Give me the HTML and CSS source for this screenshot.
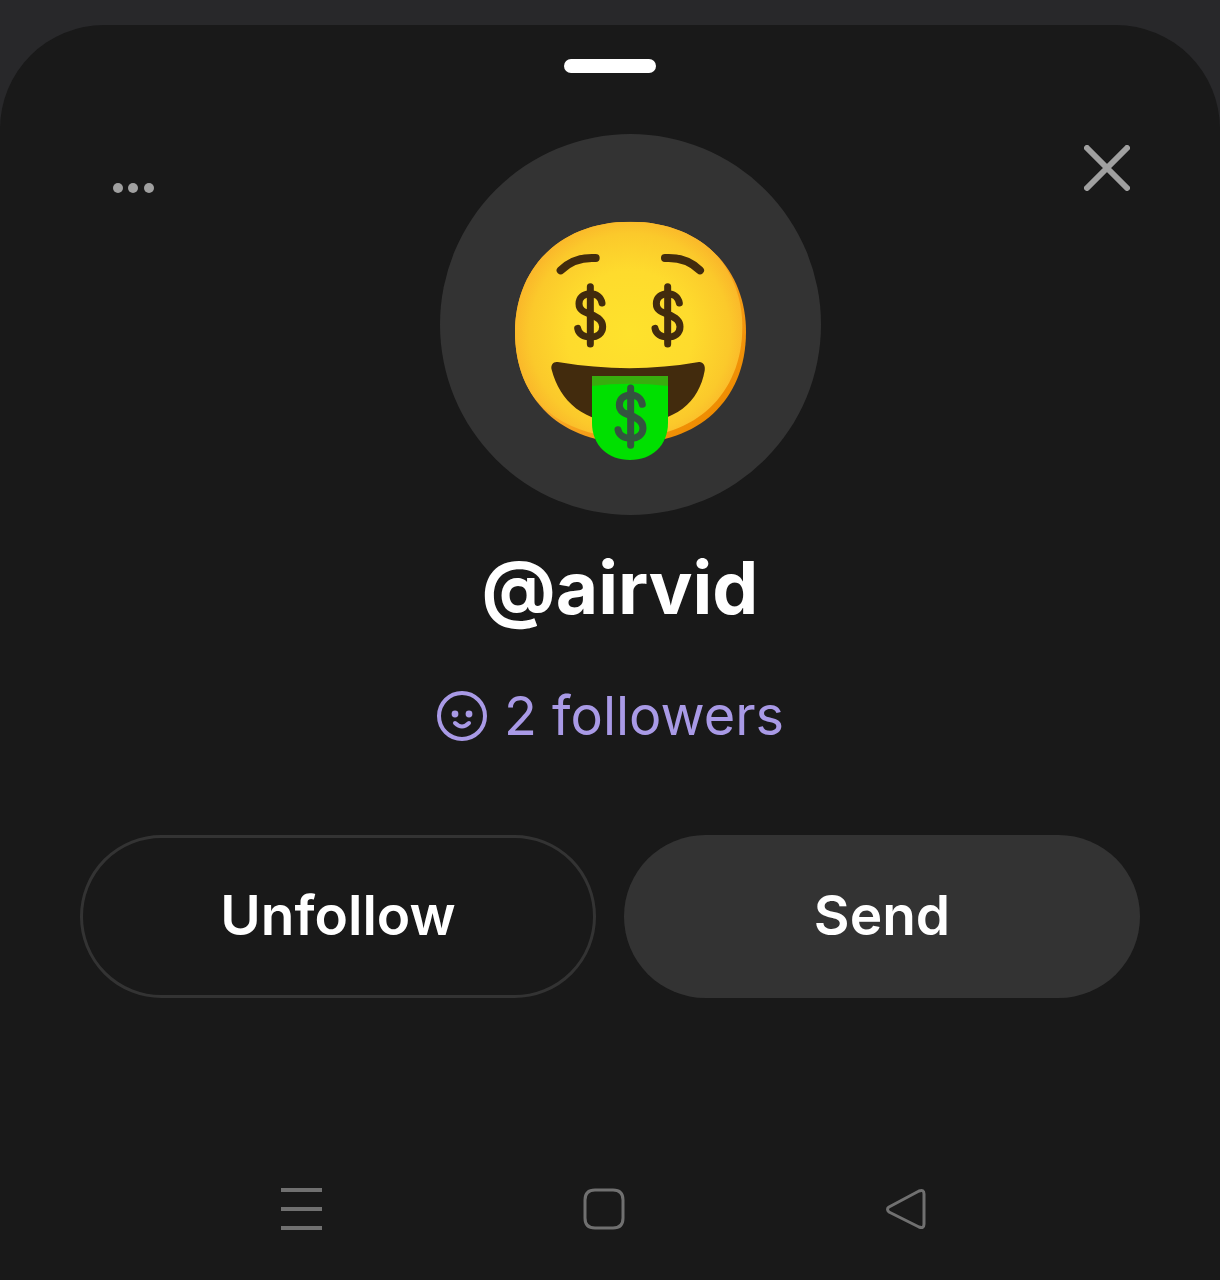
FILE: index.html
```html
<!DOCTYPE html>
<html lang="en">
<head>
<meta charset="utf-8">
<meta name="viewport" content="width=device-width, initial-scale=1">
<title>@airvid</title>
<link rel="stylesheet" href="styles.css">
</head>
<body>
<main class="sheet">
  <div class="handle"></div>
  <header class="profile-header">
    <button class="icon-button more" type="button" aria-label="More options">
      <svg width="42" height="12" viewBox="0 0 42 12" fill="#a0a0a0"><circle cx="6" cy="6" r="5"/><circle cx="21" cy="6" r="5"/><circle cx="37" cy="6" r="5"/></svg>
    </button>
    <div class="avatar">
      <svg class="emoji" viewBox="-180 -213 1143 1143" role="img" aria-label="Money-mouth face">
        <defs>
          <radialGradient id="face" cx="390" cy="385" r="375" gradientUnits="userSpaceOnUse">
            <stop offset="0" stop-color="#fee22c"/>
            <stop offset=".5" stop-color="#fedb2d"/>
            <stop offset=".8" stop-color="#fbc92b"/>
            <stop offset=".93" stop-color="#fab72a"/>
            <stop offset="1" stop-color="#f8a327"/>
          </radialGradient>
          <linearGradient id="rim" x1="200" y1="200" x2="640" y2="640" gradientUnits="userSpaceOnUse">
            <stop offset=".4" stop-color="#f9aa28"/>
            <stop offset="1" stop-color="#ee8b00"/>
          </linearGradient>
          <clipPath id="head"><path d="M391 50C610 50 738 198 738 380C738 590 590 714 391 714C192 714 45 590 45 380C45 198 172 50 391 50Z"/></clipPath>
        </defs>
        <g clip-path="url(#head)">
          <path fill="url(#rim)" d="M30 30H750V730H30Z"/>
          <path fill="url(#face)" d="M385 40C600 40 727 190 727 365C727 570 582 697 385 697C186 697 35 580 35 370C35 190 170 40 385 40Z"/>
        </g>
        <g fill="none" stroke="#422b0d" stroke-width="24" stroke-linecap="round">
          <path d="M182 196Q223 155 287 159"/>
          <path d="M600 196Q559 155 495 159"/>
        </g>
        <path fill="#422b0d" d="M173 471Q391 508 597 471C609 470 617 482 614 497C597 590 529 654 390 656C248 655 180 588 155 494C151 480 160 469 173 471Z"/>
        <path fill="#00e000" d="M276 513H504V654C504 722 455 765 390 765C325 765 276 722 276 654Z"/>
        <path fill="#38ad0e" d="M276 513H504V543Q390 530 276 543Z"/>
        <defs>
          <g id="dollar" fill="none" stroke-width="21" stroke-linecap="round">
            <path d="M0-85V87"/>
            <path d="M35-36C32-53 18-64 0-64C-20-64-34-52-34-34C-34-14-18-9 0-2C20 5 37 14 37 35C37 54 22 66 0 66C-20 66-35 57-38 40"/>
          </g>
        </defs>
        <use href="#dollar" x="271" y="330" stroke="#422b0d"/>
        <use href="#dollar" x="503" y="330" stroke="#422b0d"/>
        <use href="#dollar" x="392" y="634" stroke="#34543f"/>
      </svg>
    </div>
    <button class="icon-button close" type="button" aria-label="Close">
      <svg width="46" height="46" viewBox="0 0 46 46" fill="none" stroke="#a0a0a0" stroke-width="6" stroke-linecap="round"><path d="M3 3 43 43M43 3 3 43"/></svg>
    </button>
  </header>
  <h1 class="username">@airvid</h1>
  <a class="followers" href="#followers">
    <svg width="52" height="52" viewBox="0 0 52 52" fill="none" stroke="#a99ae6" stroke-width="4" stroke-linecap="round"><circle cx="26" cy="26" r="23"/><path d="M19 33Q26 40 33 33"/><g fill="#a99ae6" stroke="none"><circle cx="19" cy="24" r="3.4"/><circle cx="33" cy="24" r="3.4"/></g></svg>
    <span>2 followers</span>
  </a>
  <div class="actions">
    <button class="action outline" type="button">Unfollow</button>
    <button class="action filled" type="button">Send</button>
  </div>
  <nav class="system-nav" aria-label="System navigation">
    <button class="icon-button" type="button" aria-label="Recent apps"><svg width="42" height="42" viewBox="0 0 42 42" fill="none" stroke="#707070" stroke-width="4"><path d="M0 2H41M0 21H41M0 40H41"/></svg></button>
    <button class="icon-button" type="button" aria-label="Home"><svg width="42" height="42" viewBox="0 0 42 42" fill="none" stroke="#707070" stroke-width="3"><path d="M12 2H30Q40 2 40 12V30Q40 40 30 40H12Q2 40 2 30V12Q2 2 12 2Z"/></svg></button>
    <button class="icon-button" type="button" aria-label="Back"><svg width="42" height="42" viewBox="0 0 42 42" fill="none" stroke="#707070" stroke-width="3" stroke-linejoin="round"><path d="M4 19 34 3Q39 1 39 6V36Q39 41 34 39L4 24Q1 21 4 19Z"/></svg></button>
  </nav>
</main>
</body>
</html>
```
FILE: styles.css
```css
* {
  box-sizing: border-box;
}

body {
  margin: 0;
  padding-top: 25px;
  min-height: 100vh;
  display: flex;
  background: #28282a;
  color: #fff;
  font-family: Inter, "Liberation Sans", sans-serif;
}

button {
  border: 0;
  background: none;
  color: inherit;
  font: inherit;
  cursor: pointer;
}

svg {
  display: block;
}

.sheet {
  flex: 1;
  display: flex;
  flex-direction: column;
  padding-top: 34px;
  border-radius: 104px 104px 0 0;
  background: #191919;
}

.handle {
  align-self: center;
  width: 92px;
  height: 14px;
  border-radius: 7px;
  background: #fff;
}

.profile-header {
  display: grid;
  grid-template-columns: 1fr auto 1fr;
  align-items: start;
  margin-top: 61px;
  padding: 0 72px 0 112px;
}

.icon-button {
  padding: 0;
}

.more {
  justify-self: start;
  padding: 48px 0;
}

.close {
  justify-self: end;
  padding: 11px 18px;
}

.avatar {
  width: 381px;
  height: 381px;
  border-radius: 50%;
  background: #333;
}

.emoji {
  width: 100%;
  height: 100%;
}

.username {
  margin: 25px 0 0 20px;
  text-align: center;
  font-size: 73px;
  line-height: 96px;
  font-weight: 700;
}

.followers {
  align-self: center;
  display: flex;
  align-items: center;
  gap: 16px;
  margin-top: 44px;
  color: #a99ae6;
  font-size: 54px;
  line-height: 72px;
  text-decoration: none;
}

.actions {
  display: grid;
  grid-template-columns: 1fr 1fr;
  gap: 28px;
  margin-top: 83px;
  padding: 0 80px;
}

.action {
  height: 163px;
  padding: 0 0 4px;
  border-radius: 82px;
  font-size: 55px;
  font-weight: 600;
}

.outline {
  border: 3px solid #333;
}

.filled {
  background: #333;
}

.system-nav {
  display: flex;
  justify-content: space-between;
  margin-top: auto;
  padding: 40px 24% 50px 23%;
}
```
